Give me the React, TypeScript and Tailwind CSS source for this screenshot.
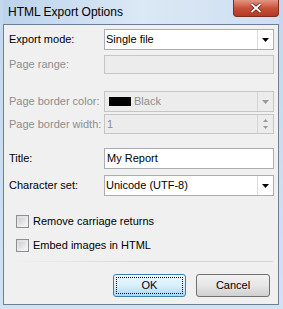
import React from "react";

const font = { fontFamily: '"Liberation Sans", Arial, sans-serif' };

function Arrow({ color = "#000" }: { color?: string }) {
  return (
    <svg width="7" height="4" viewBox="0 0 7 4">
      <path d="M0 0H7L3.5 4Z" fill={color} />
    </svg>
  );
}

function Combo({ children, disabled }: { children: React.ReactNode; disabled?: boolean }) {
  return (
    <div
      className={`flex h-[21px] w-[170px] shrink-0 items-stretch border ${
        disabled ? "border-[#c5c5c5] bg-[#ececec] text-[#8d8d8d]" : "border-[#abadb3] bg-white text-black"
      }`}
    >
      <div className="flex flex-1 items-center pl-[1px]">{children}</div>
      <div className={`flex w-[16px] items-center justify-center border-l ${disabled ? "border-[#d4d4d4]" : "border-[#dcdcdc]"}`}>
        <Arrow color={disabled ? "#9a9a9a" : "#000"} />
      </div>
    </div>
  );
}

function Label({ children, disabled }: { children: React.ReactNode; disabled?: boolean }) {
  return (
    <div className={`w-[95px] shrink-0 whitespace-nowrap ${disabled ? "text-[#8d8d8d]" : "text-black"}`}>{children}</div>
  );
}

function Check({ label }: { label: string }) {
  return (
    <div className="flex items-center">
      <div className="ml-[7px] h-[13px] w-[13px] shrink-0 border border-[#8e8f8f] bg-gradient-to-br from-[#dcdcdc] to-[#f6f6f6] p-[2px]">
        <div className="h-full w-full bg-gradient-to-br from-[#cbcfd5] to-[#f4f4f4]" />
      </div>
      <span className="ml-[4px] whitespace-nowrap">{label}</span>
    </div>
  );
}

export default function App() {
  return (
    <div
      className="relative flex h-[309px] w-[283px] flex-col overflow-hidden bg-gradient-to-b from-[#c3d7ee] to-[#d3e2f2] pb-[4px] pl-[3px] pr-[4px] text-[11px] leading-[13px]"
      style={font}
    >
      <div className="flex h-[24px] shrink-0 items-center bg-gradient-to-r from-[#bcd3ec] via-[#dbe8f5] to-[#cfdff1] pl-[5px]">
        <span className="text-[12px] text-black">HTML Export Options</span>
      </div>
      <div className="absolute right-[4px] top-0 flex h-[17px] w-[46px] items-center justify-center rounded-b-[4px] border border-t-0 border-[#7e2a1e] bg-gradient-to-b from-[#e29684] via-[#c9503a] to-[#b23a25]">
        <svg width="12" height="10" viewBox="0 0 12 10">
          <path d="M1.5 1L10.5 9M10.5 1L1.5 9" stroke="#5a1a10" strokeWidth="3.4" fill="none" />
          <path d="M1.5 1L10.5 9M10.5 1L1.5 9" stroke="#fff" strokeWidth="1.8" fill="none" />
        </svg>
      </div>
      <div className="flex min-h-0 flex-1 flex-col border border-[#6d7f95] bg-[#f0f0f0] pl-[5px] pr-[3px]">
        <div className="mt-[4px] flex items-center">
          <Label>Export mode:</Label>
          <Combo>Single file</Combo>
        </div>
        <div className="mt-[5px] flex items-center">
          <Label disabled>Page range:</Label>
          <div className="h-[19px] w-[170px] shrink-0 border border-[#c5c5c5] bg-[#ececec]" />
        </div>
        <div className="mt-[17px] flex items-center">
          <Label disabled>Page border color:</Label>
          <Combo disabled>
            <div className="ml-[3px] h-[9px] w-[22px] bg-black" />
            <span className="ml-[3px]">Black</span>
          </Combo>
        </div>
        <div className="mt-[2px] flex items-center">
          <Label disabled>Page border width:</Label>
          <div className="flex h-[20px] w-[170px] shrink-0 items-stretch border border-[#c5c5c5] bg-[#ececec] text-[#8d8d8d]">
            <div className="flex flex-1 items-center pl-[2px]">1</div>
            <div className="flex w-[16px] flex-col items-center justify-center gap-[4px] border-l border-[#d4d4d4]">
              <svg width="5" height="3" viewBox="0 0 5 3"><path d="M0 3H5L2.5 0Z" fill="#9a9a9a" /></svg>
              <svg width="5" height="3" viewBox="0 0 5 3"><path d="M0 0H5L2.5 3Z" fill="#9a9a9a" /></svg>
            </div>
          </div>
        </div>
        <div className="mt-[14px] flex items-center">
          <Label>Title:</Label>
          <div className="flex h-[21px] w-[170px] shrink-0 items-center border border-[#abadb3] bg-white pl-[2px]">My Report</div>
        </div>
        <div className="mt-[6px] flex items-center">
          <Label>Character set:</Label>
          <Combo>Unicode (UTF-8)</Combo>
        </div>
        <div className="mt-[19px]">
          <Check label="Remove carriage returns" />
        </div>
        <div className="mt-[11px]">
          <Check label="Embed images in HTML" />
        </div>
        <div className="ml-[5px] mr-[2px] mt-[9px] h-[1px] shrink-0 bg-gradient-to-r from-[#f0f0f0] via-[#d5d5d5] to-[#d5d5d5]" />
        <div className="mt-[12px] flex justify-end gap-[10px] pr-[5px]">
          <div className="flex h-[23px] w-[73px] items-center justify-center rounded-[3px] border border-[#3c7fb1] bg-gradient-to-b from-[#eaf6fd] via-[#d9f0fc] to-[#a7d9f5] p-[2px]">
            <div className="flex h-full w-full items-center justify-center border border-dotted border-black">OK</div>
          </div>
          <div className="flex h-[23px] w-[74px] items-center justify-center rounded-[3px] border border-[#707070] bg-gradient-to-b from-[#f2f2f2] via-[#e6e6e6] to-[#d0d0d0]">
            Cancel
          </div>
        </div>
      </div>
    </div>
  );
}
